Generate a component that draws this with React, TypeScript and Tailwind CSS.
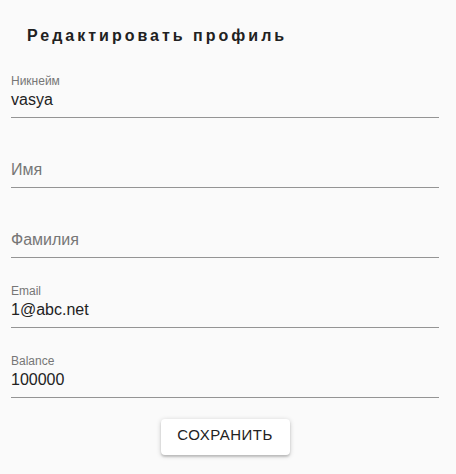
const fields = [
  { label: "Никнейм", value: "vasya" },
  { label: "Имя", value: "" },
  { label: "Фамилия", value: "" },
  { label: "Email", value: "1@abc.net" },
  { label: "Balance", value: "100000" },
];

const Field = ({ label, value }: { label: string; value: string }) => {
  return (
    <div className="flex h-[70px] flex-col justify-end border-b border-[#949494] pb-[8px]">
      {value ? (
        <>
          <p className="text-xs leading-[14px] text-[#767676]">{label}</p>
          <p className="mt-[2px] text-base leading-[19px] text-[#222]">{value}</p>
        </>
      ) : (
        <p className="text-base leading-[19px] text-[#767676]">{label}</p>
      )}
    </div>
  );
};

export default function App() {
  return (
    <div className="min-h-[474px] w-full bg-[#fafafa] font-['Liberation_Sans',Arial,sans-serif]">
      <h1 className="pl-[27px] pt-[26px] text-base font-bold leading-[19px] tracking-[3px] text-[#212121]">
        Редактировать профиль
      </h1>
      <form className="flex flex-col pl-[11px] pr-[17px] pt-[3px]">
        {fields.map((f) => (
          <Field key={f.label} label={f.label} value={f.value} />
        ))}
        <div className="flex justify-center pt-[21px]">
          <button
            type="button"
            className="h-[36px] w-[129px] rounded-[4px] bg-white pb-[3px] text-[15px] uppercase tracking-[0.5px] text-[#222] shadow-[0_1px_5px_rgba(0,0,0,0.2),0_2px_2px_rgba(0,0,0,0.14)]"
          >
            Сохранить
          </button>
        </div>
      </form>
    </div>
  );
}
